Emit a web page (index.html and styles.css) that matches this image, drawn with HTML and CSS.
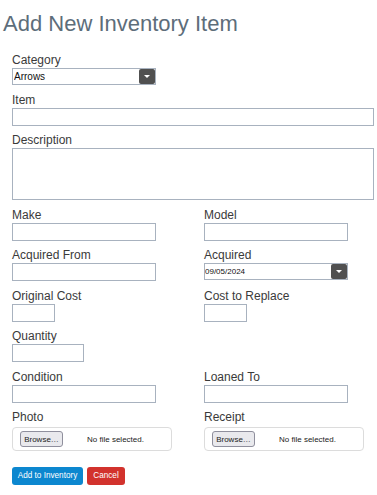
FILE: index.html
```html
<!DOCTYPE html>
<html lang="en">
<head>
    <meta charset="UTF-8">
    <meta name="viewport" content="width=device-width, initial-scale=1.0">
    <title>Add New Inventory Item</title>
    <link rel="stylesheet" href="styles.css">
</head>
<body>
    <h1 class="title">Add New Inventory Item</h1>

    <form class="form">
        <div class="field">
            <label class="label" for="category">Category</label>
            <div class="select">
                <select id="category" class="select-input">
                    <option>Arrows</option>
                </select>
                <span class="select-arrow"></span>
            </div>
        </div>

        <div class="field">
            <label class="label" for="item">Item</label>
            <input type="text" class="input input-full" id="item">
        </div>

        <div class="field">
            <label class="label" for="description">Description</label>
            <textarea class="input textarea" id="description"></textarea>
        </div>

        <!-- two column rows -->
        <div class="row">
            <div class="field">
                <label class="label" for="make">Make</label>
                <input type="text" class="input" id="make">
            </div>
            <div class="field">
                <label class="label" for="model">Model</label>
                <input type="text" class="input" id="model">
            </div>
        </div>

        <div class="row">
            <div class="field">
                <label class="label" for="acquired-from">Acquired From</label>
                <input type="text" class="input" id="acquired-from">
            </div>
            <div class="field">
                <label class="label" for="acquired">Acquired</label>
                <div class="select">
                    <select id="acquired" class="select-input select-date">
                        <option>09/05/2024</option>
                    </select>
                    <span class="select-arrow"></span>
                </div>
            </div>
        </div>

        <div class="row">
            <div class="field">
                <label class="label" for="original-cost">Original Cost</label>
                <input type="text" class="input input-cost" id="original-cost">
            </div>
            <div class="field">
                <label class="label" for="replace-cost">Cost to Replace</label>
                <input type="text" class="input input-cost" id="replace-cost">
            </div>
        </div>

        <div class="field">
            <label class="label" for="quantity">Quantity</label>
            <input type="text" class="input input-qty" id="quantity">
        </div>

        <div class="row">
            <div class="field">
                <label class="label" for="condition">Condition</label>
                <input type="text" class="input" id="condition">
            </div>
            <div class="field">
                <label class="label" for="loaned-to">Loaned To</label>
                <input type="text" class="input" id="loaned-to">
            </div>
        </div>

        <div class="row">
            <div class="field">
                <span class="label">Photo</span>
                <div class="file">
                    <button type="button" class="file-button">Browse…</button>
                    <span class="file-name">No file selected.</span>
                </div>
            </div>
            <div class="field">
                <span class="label">Receipt</span>
                <div class="file">
                    <button type="button" class="file-button">Browse…</button>
                    <span class="file-name">No file selected.</span>
                </div>
            </div>
        </div>

        <div class="actions">
            <button type="submit" class="btn btn-primary">Add to Inventory</button>
            <button type="button" class="btn btn-danger">Cancel</button>
        </div>
    </form>
</body>
</html>
```

FILE: styles.css
```css
* { margin: 0; padding: 0; box-sizing: border-box; }

body {
    font-family: 'Liberation Sans', Arial, sans-serif;
    background: #fff;
    color: #333;
}

.title {
    font-size: 22px;
    line-height: 26px;
    font-weight: 400;
    color: #5d6d7a;
    margin: 11px 0 0 3px;
}

.form {
    padding: 16px 3px 0 12px;
}

.row {
    display: grid;
    grid-template-columns: 192px 1fr;
}

.field {
    display: flex;
    flex-direction: column;
    align-items: flex-start;
    margin-bottom: 7.5px;
}

.label {
    font-size: 12px;
    line-height: 14px;
    color: #3a3a3a;
    margin-bottom: 1px;
}

.input {
    width: 144px;
    height: 18px;
    border: 1px solid #a8b2bf;
    background: #fff;
    font-family: inherit;
    font-size: 10px;
    padding: 0 2px;
}

.input-full { width: 362px; }
.input-cost { width: 43px; }
.input-qty { width: 72px; }

.textarea {
    width: 362px;
    height: 52px;
    resize: none;
}

/* select with dark arrow button */
.select {
    display: flex;
    align-items: center;
    width: 144px;
    height: 17px;
    border: 1px solid #a8b2bf;
    background: #fff;
}

.select-input {
    flex: 1;
    min-width: 0;
    height: 100%;
    border: none;
    background: none;
    appearance: none;
    -webkit-appearance: none;
    font-family: inherit;
    font-size: 10px;
    color: #111;
    padding: 0 1px;
    outline: none;
}

.select-date { font-size: 8px; padding: 0; }

.select-arrow {
    width: 16px;
    height: 15px;
    border-radius: 2px;
    background: #505050;
    display: flex;
    align-items: center;
    justify-content: center;
}

.select-arrow::after {
    content: '';
    border-left: 3px solid transparent;
    border-right: 3px solid transparent;
    border-top: 3px solid #fff;
}

/* fake file inputs */
.file {
    display: flex;
    align-items: center;
    width: 160px;
    height: 24px;
    border: 1px solid #dcdcdc;
    border-radius: 4px;
    padding: 0 7px;
    margin-top: 2px;
}

.file-button {
    height: 16px;
    width: 43px;
    background: #e9e9ed;
    border: 1px solid #8f8f9d;
    border-radius: 3px;
    font-family: inherit;
    font-size: 8px;
    color: #222;
}

.file-name {
    font-size: 8px;
    color: #222;
    margin-left: 24px;
}

.actions {
    display: flex;
    gap: 4px;
    margin-top: 8px;
}

.btn {
    height: 18px;
    border: none;
    border-radius: 3px;
    color: #fff;
    font-family: inherit;
    font-size: 8.2px;
    cursor: pointer;
}

.btn-primary { background: #0c87cf; width: 71px; }
.btn-danger { background: #d2322d; width: 38px; }
```
